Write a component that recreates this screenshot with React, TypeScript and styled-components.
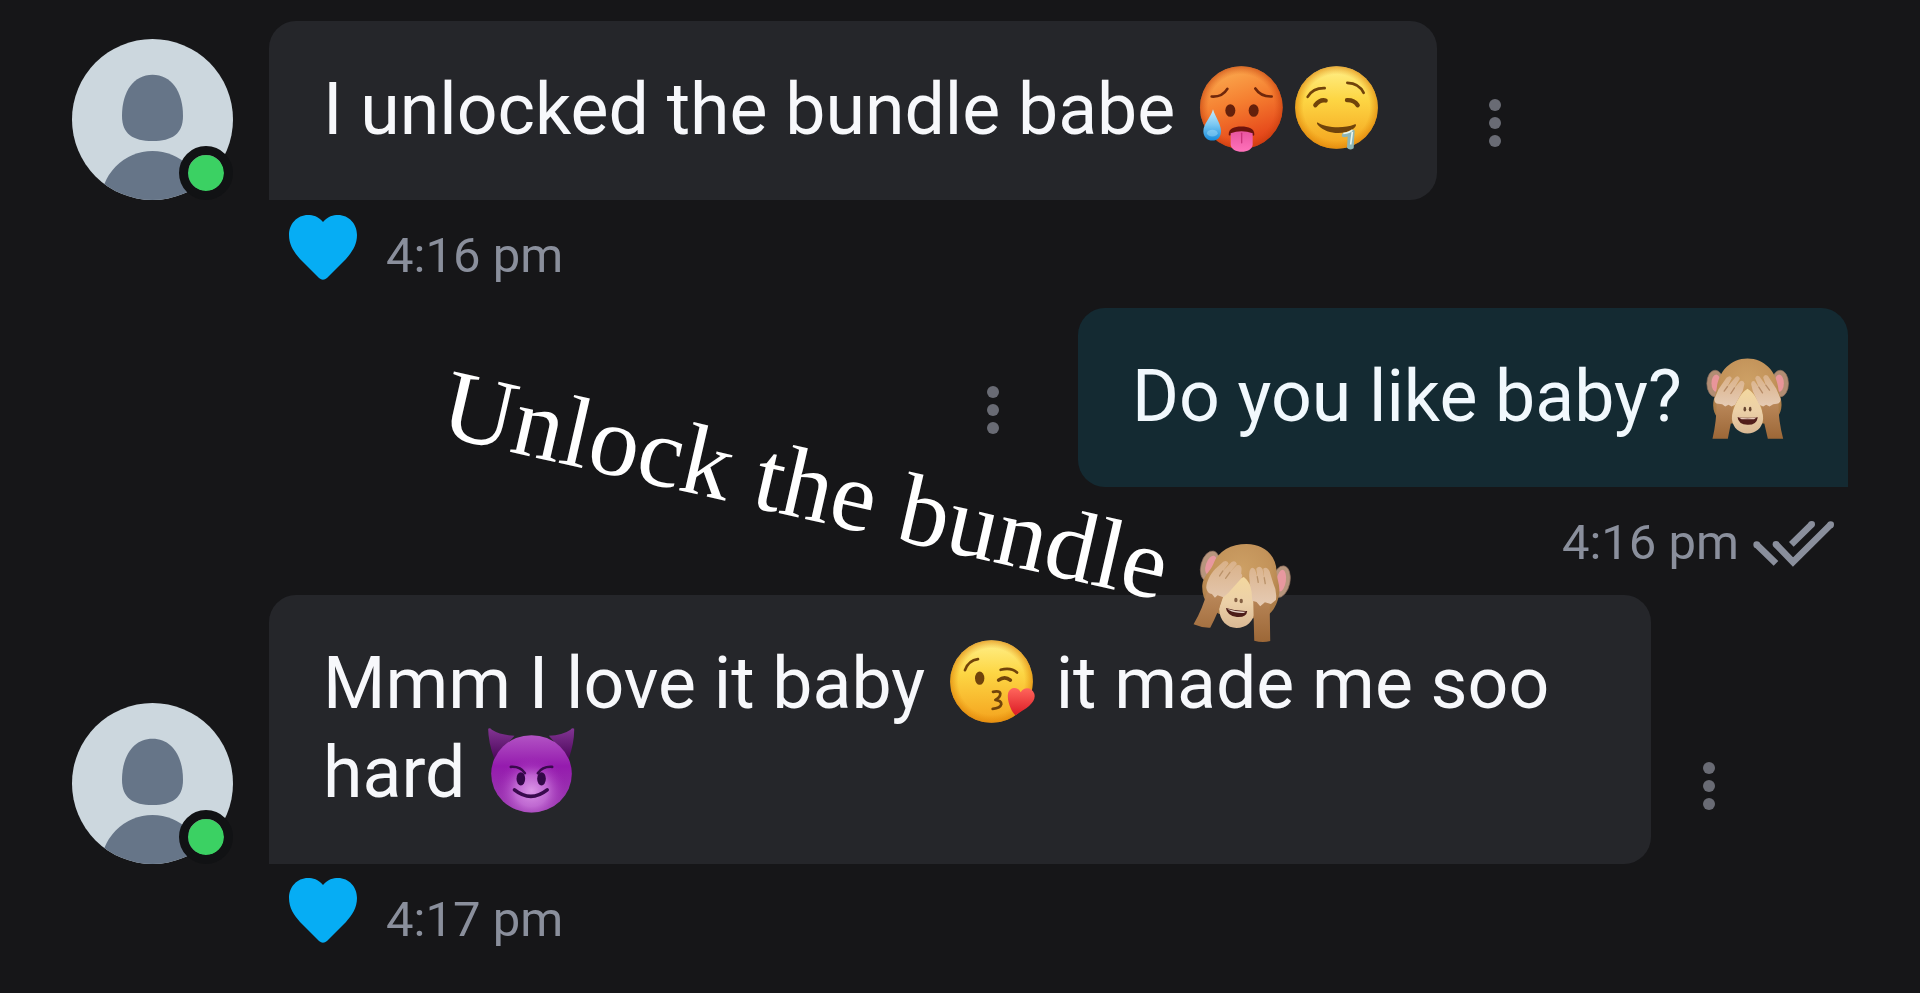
import React from 'react';
import styled, { createGlobalStyle } from 'styled-components';

const GlobalStyle = createGlobalStyle`
  * { box-sizing: border-box; }
  html, body { margin: 0; background: #161618; overflow: hidden; }
`;

const Chat = styled.main`
  position: relative;
  display: flex;
  flex-direction: column;
  width: 1920px;
  height: 993px;
  padding: 20.6px 72px 0;
  background: #161618;
  font-family: Roboto, "Liberation Sans", sans-serif;
  overflow: hidden;
`;

const Message = styled.section<{ $own?: boolean }>`
  display: flex;
  flex-direction: column;
  align-items: ${p => (p.$own ? 'flex-end' : 'stretch')};
`;

const BubbleRow = styled.div`
  display: flex;
  align-items: flex-end;
`;

const AvatarBox = styled.div`
  position: relative;
  width: 161px;
  height: 161px;
  margin-right: 36px;
  flex: none;
  svg { display: block; }
`;

const Online = styled.span`
  position: absolute;
  left: 107px;
  top: 107.4px;
  width: 54px;
  height: 54px;
  border: 9px solid #111214;
  border-radius: 50%;
  background: #3bd163;
  background-clip: padding-box;
`;

const Bubble = styled.div<{ $own?: boolean; $width: number }>`
  width: ${p => p.$width}px;
  padding: 44px 40px 46px 54px;
  margin-right: ${p => (p.$own ? 0 : 52)}px;
  background: ${p => (p.$own ? '#142a32' : '#25262a')};
  border-radius: ${p => (p.$own ? '27px 27px 0 27px' : '27px 27px 27px 0')};
  color: ${p => (p.$own ? '#f1f8fd' : '#f7f8fb')};
  font-size: 71.6px;
  line-height: 89.5px;
  white-space: nowrap;
`;

const Emoji = styled.svg`
  display: inline-block;
  width: 95px;
  height: 95px;
  margin: -4.5px -0.6px -4px 0.6px;
  vertical-align: top;
  overflow: visible;
`;

const Dots = styled.div<{ $own?: boolean }>`
  display: flex;
  flex-direction: column;
  gap: 6px;
  align-self: ${p => (p.$own ? 'center' : 'flex-end')};
  margin: ${p => (p.$own ? '25px 79px 0 0' : '0 0 53.3px')};
  i {
    width: 12px;
    height: 12px;
    border-radius: 50%;
    background: #696b74;
  }
`;

const Meta = styled.div<{ $own?: boolean }>`
  display: flex;
  align-items: flex-start;
  height: 107.5px;
  padding: ${p => (p.$own ? '27px 12px 0 0' : '14px 0 0 217px')};
  svg { margin-top: ${p => (p.$own ? '3.6px' : '0.8px')}; }
`;

const Time = styled.time<{ $own?: boolean }>`
  margin: ${p => (p.$own ? '0 12px 0 0' : '13px 0 0 29px')};
  color: #8a8f9c;
  font-size: 49px;
  line-height: 58px;
`;

const Sticker = styled.div`
  position: absolute;
  left: 437px;
  top: 346px;
  display: flex;
  color: #fff;
  font: 100.3px/112px "Liberation Serif", "Times New Roman", serif;
  white-space: pre;
  transform-origin: 0 90px;
  transform: rotate(12.87deg);
  svg { width: 105px; height: 105px; margin: 9px 0 0 2px; overflow: visible; }
`;

function Avatar() {
  return (
    <AvatarBox>
      <svg width="161" height="161" viewBox="0 0 161 161">
        <defs><clipPath id="av"><circle cx="80.5" cy="80.5" r="80.5" /></clipPath></defs>
        <g clipPath="url(#av)">
          <rect width="161" height="161" fill="#ccd7de" />
          <path d="M80.5 35.7C99 35.7 111 52 111 77C111 95 100 102 80.5 102S50 95 50 77C50 52 62 35.7 80.5 35.7Z" fill="#667588" />
          <ellipse cx="80.5" cy="165" rx="52" ry="53" fill="#667588" />
        </g>
      </svg>
      <Online />
    </AvatarBox>
  );
}

function Menu({ own }: { own?: boolean }) {
  return <Dots $own={own}><i /><i /><i /></Dots>;
}

function Heart() {
  return (
    <svg width="68" height="65" viewBox="0 0 68 65">
      <path d="M34 7C29 1 24 0 19 0C8 0 0 9 0 20C0 30 5 37 11 44L30 63Q34 66.500 38 63L57 44C63 37 68 30 68 20C68 9 60 0 49 0C44 0 39 1 34 7Z" fill="#06adf4" />
    </svg>
  );
}

function Checks() {
  return (
    <svg width="85" height="50" viewBox="21 24 255 150" fill="none" stroke="#8a8f9c" strokeWidth="20">
      <path d="M38 104L96 160M96 103L147 156L260 44M142 103L203 43" />
      <g fill="#8a8f9c" stroke="none">
        <circle cx="38" cy="104" r="10" /><circle cx="96" cy="103" r="10" />
        <circle cx="260" cy="44" r="10" /><circle cx="203" cy="43" r="10" />
      </g>
    </svg>
  );
}

function HotFace() {
  return (
    <Emoji viewBox="40 61.5 285 285">
      <defs>
        <linearGradient id="hot" x1="0.3" y1="0" x2="0.65" y2="1">
          <stop offset="0" stopColor="#fbad51" /><stop offset=".45" stopColor="#f57e30" /><stop offset="1" stopColor="#e23a15" />
        </linearGradient>
        <radialGradient id="hotEdge"><stop offset=".8" stopColor="#d34a12" stopOpacity="0" /><stop offset="1" stopColor="#c23c0c" stopOpacity=".6" /></radialGradient>
        <linearGradient id="drop" x1="0" y1="0" x2="0" y2="1"><stop offset="0" stopColor="#c9ecfb" /><stop offset=".5" stopColor="#79c7f2" /><stop offset="1" stopColor="#168bdc" /></linearGradient>
        <linearGradient id="tongue" x1="0" y1="0" x2="0" y2="1"><stop offset="0" stopColor="#e9559f" /><stop offset="1" stopColor="#ff72bb" /></linearGradient>
      </defs>
      <circle cx="182" cy="204" r="124" fill="url(#hot)" />
      <circle cx="182" cy="204" r="124" fill="url(#hotEdge)" />
      <path d="M93 171Q125 173 140 148M224 147Q240 172 273 171" fill="none" stroke="#70270b" strokeWidth="8" strokeLinecap="round" />
      <ellipse cx="149" cy="213" rx="15" ry="19" fill="#65200b" />
      <ellipse cx="219" cy="213" rx="15" ry="19" fill="#65200b" />
      <path d="M144 284C145 267 160 261 182 261S221 267 221 284Q221 291 214 287Q182 275 150 287Q144 290 144 284Z" fill="#6c130d" />
      <path d="M150 281Q182 270 216 281V314C216 344 150 344 150 314Z" fill="url(#tongue)" />
      <path d="M183 281V310" stroke="#cb337b" strokeWidth="4" strokeLinecap="round" />
      <path d="M97 209C105 235 121 253 121 275C121 293 110 303 95 303S68 292 68 275C68 253 90 235 97 209Z" fill="url(#drop)" />
      <ellipse cx="95" cy="281" rx="16" ry="10" fill="#a8e0fb" opacity=".45" />
    </Emoji>
  );
}

function DroolFace() {
  return (
    <Emoji viewBox="325 61.500 285 285">
      <defs>
        <linearGradient id="yellow" x1="0" y1="0" x2="0" y2="1">
          <stop offset="0" stopColor="#fff08a" /><stop offset=".4" stopColor="#fdd644" /><stop offset="1" stopColor="#f4a21d" />
        </linearGradient>
        <radialGradient id="yellowEdge"><stop offset=".8" stopColor="#e38a09" stopOpacity="0" /><stop offset="1" stopColor="#dd8208" stopOpacity=".65" /></radialGradient>
      </defs>
      <circle cx="467.5" cy="204" r="124" fill="url(#yellow)" />
      <circle cx="467.5" cy="204" r="124" fill="url(#yellowEdge)" />
      <g fill="none" stroke="#71430a" strokeLinecap="round">
        <path d="M381 172Q397 145 432 146M500 130Q535 131 549 160" strokeWidth="8" />
        <path d="M404 197Q418 179 435 183M499 182Q520 181 531 197" strokeWidth="13" />
      </g>
      <path d="M411 249C432 265 491 268 521 255C529 252 527 261 518 268C489 288 437 284 413 258C407 251 408 248 411 249Z" fill="#70430b" />
      <path d="M485 282Q503 281 516 270L522 273L519 326Q507 334 499 325L501 291Q489 296 483 290Z" fill="#8db5b5" />
      <path d="M488 282Q507 280 515 272M515 277L510 315" fill="none" stroke="#e9f5ed" strokeWidth="5" />
    </Emoji>
  );
}

function KissFace() {
  return (
    <Emoji viewBox="280 555.500 285 285">
      <defs>
        <linearGradient id="heartRed" x1="0" y1="0" x2="0" y2="1"><stop offset="0" stopColor="#ff665c" /><stop offset="1" stopColor="#dc1c26" /></linearGradient>
      </defs>
      <circle cx="422.500" cy="698" r="124" fill="url(#yellow)" />
      <circle cx="422.500" cy="698" r="124" fill="url(#yellowEdge)" />
      <ellipse cx="387" cy="688" rx="14" ry="20" fill="#70430b" />
      <g fill="none" stroke="#71430a" strokeLinecap="round" strokeLinejoin="round">
        <path d="M343 664Q353 635 382 631M450 663Q481 655 499 671" strokeWidth="8" />
        <path d="M444 694Q462 680 479 694" strokeWidth="11" />
        <path d="M427 729Q447 725 449 734Q449 746 434 753Q452 755 452 766Q449 778 426 780" strokeWidth="8" />
      </g>
      <path d="M510 730C520 712 545 715 551 735C558 760 529 778 495 799C484 794 468 756 472 735C477 713 502 713 510 730Z" fill="url(#heartRed)" />
    </Emoji>
  );
}

function DevilFace() {
  return (
    <Emoji viewBox="552.500 311.500 285 285">
      <defs>
        <linearGradient id="devil" x1="0" y1="0" x2="0" y2="1"><stop offset="0" stopColor="#b253c4" /><stop offset=".4" stopColor="#951bae" /><stop offset="1" stopColor="#9c43b0" /></linearGradient>
        <radialGradient id="devilGlow" cx=".5" cy=".72" r=".45"><stop offset="0" stopColor="#dc97e8" /><stop offset=".45" stopColor="#cb77dc" stopOpacity=".75" /><stop offset="1" stopColor="#9c1cb4" stopOpacity="0" /></radialGradient>
        <linearGradient id="horn" x1="0" y1="0" x2="0" y2="1"><stop offset="0" stopColor="#823593" /><stop offset="1" stopColor="#4d075c" /></linearGradient>
      </defs>
      <path d="M565 326Q570 322 576 329Q601 345 644 347L583 415Q565 365 565 326ZM823 326Q818 322 812 329Q788 346 747 347L807 415Q824 365 823 326Z" fill="url(#horn)" />
      <ellipse cx="695" cy="461" rx="121" ry="116" fill="url(#devil)" />
      <ellipse cx="695" cy="461" rx="121" ry="116" fill="url(#devilGlow)" />
      <g fill="none" stroke="#390a4d" strokeLinecap="round">
        <path d="M633 440Q662 438 675 459M757 440Q728 438 714 459" strokeWidth="8" />
        <path d="M644 509Q693 548 742 509" strokeWidth="11" />
      </g>
      <ellipse cx="663" cy="476" rx="13" ry="20" fill="#320847" /><ellipse cx="725" cy="476" rx="13" ry="20" fill="#320847" />
    </Emoji>
  );
}

function Monkey() {
  return (
    <Emoji viewBox="11.500 -7.500 285 285">
      <defs>
        <radialGradient id="fur" cx=".5" cy=".35" r=".65"><stop offset="0" stopColor="#cda065" /><stop offset=".6" stopColor="#c3935a" /><stop offset="1" stopColor="#a97a46" /></radialGradient>
        <linearGradient id="arm" x1="0" y1="0" x2="0" y2="1"><stop offset="0" stopColor="#bc8a5c" /><stop offset="1" stopColor="#9c6737" /></linearGradient>
        <linearGradient id="skin" x1="0" y1="0" x2="0" y2="1"><stop offset="0" stopColor="#f3d89f" /><stop offset=".5" stopColor="#ecd0a8" /><stop offset="1" stopColor="#d9b894" /></linearGradient>
        <linearGradient id="hand" x1="0" y1="0" x2="0" y2="1"><stop offset="0" stopColor="#d9b189" /><stop offset="1" stopColor="#e6cbb4" /></linearGradient>
      </defs>
      <g fill="#b28d74" stroke="#8d6f5d" strokeWidth="2">
        <ellipse cx="57" cy="102" rx="25" ry="40" /><ellipse cx="252" cy="102" rx="25" ry="40" />
      </g>
      <g fill="#e8959a"><ellipse cx="60" cy="101" rx="14" ry="26" /><ellipse cx="249" cy="101" rx="14" ry="26" /></g>
      <path d="M154 27C205 27 240 66 246 114C247 130 257 146 256 168C255 200 235 214 214 222H94C69 211 52 200 51 168C51 146 61 130 62 114C68 66 103 27 154 27Z" fill="url(#fur)" />
      <path d="M154 118C176 130 201 176 201 208C199 237 177 252 154 252S110 237 107 208C107 176 133 130 154 118Z" fill="url(#skin)" />
      <path d="M61 153L111 163Q107 217 95 268H49Q63 207 61 153ZM247 153L196 163Q201 217 215 268H261Q245 207 247 153Z" fill="url(#arm)" />
      <path d="M55 147L67 119L91 85Q102 75 107 86L94 111L118 83Q128 76 131 88L115 115L132 95Q142 90 145 102L140 124L117 166L106 171L97 166L87 171L78 164L66 163Q53 161 55 147ZM253 147L240 117L215 79Q204 72 201 84L209 107L190 81Q180 74 177 86L188 113L175 95Q166 92 165 104L170 125L189 166L201 171L210 166L220 171L231 164L242 163Q255 161 253 147Z" fill="url(#hand)" />
      <path d="M94 111L84 125M115 115L104 132M209 107L220 122M188 113L199 130" stroke="#b78c67" strokeWidth="4" strokeLinecap="round" />
      <g fill="#67452f"><ellipse cx="146" cy="179" rx="4" ry="7" /><ellipse cx="162" cy="179" rx="4" ry="7" /></g>
      <path d="M124 203Q154 207 185 203Q181 227 154 226T124 203Z" fill="#511d1a" />
      <path d="M128 204Q154 208 181 204L174 209H136Z" fill="#e7cabb" />
    </Emoji>
  );
}

function StickerMonkey() {
  return (
    <svg viewBox="1.500 7.500 315 315">
      <g transform="rotate(-12.87 159 165)">
        <g stroke="#8e6f5f" strokeWidth="2" fill="#b7957d">
          <ellipse cx="59" cy="90" rx="27" ry="46" transform="rotate(15 59 90)" /><ellipse cx="272" cy="137" rx="27" ry="48" transform="rotate(12 272 137)" />
        </g>
        <ellipse cx="62" cy="88" rx="15" ry="30" fill="#e8989f" transform="rotate(19 62 88)" />
        <ellipse cx="273" cy="134" rx="14" ry="33" fill="#e8989f" transform="rotate(8 273 134)" />
        <path d="M169 24C224 24 258 61 259 105C258 125 270 145 267 171C262 211 240 244 207 248L97 238C60 224 34 192 36 148C39 119 59 108 69 85C83 44 124 24 169 24Z" fill="url(#fur)" />
        <path d="M161 123C183 142 197 177 196 219C191 258 167 276 139 276S88 255 87 220C91 176 126 139 161 123Z" fill="url(#skin)" />
        <path d="M51 165L99 181Q85 229 60 275Q35 276 10 265Q38 217 51 165ZM189 195H238L240 315Q217 322 192 314Z" fill="url(#arm)" />
        <path d="M48 155C49 136 60 115 75 99L99 77Q112 71 115 83L98 105L124 78Q136 71 140 84L119 109L139 88Q152 83 154 98L153 113Q160 117 151 130L114 171L99 184L82 178L74 185L65 174Q51 173 48 155ZM178 105Q184 88 195 101L201 122L198 98Q207 86 217 99L222 125L219 98Q230 90 238 106L249 142Q261 166 257 192L242 204L224 199L210 211L199 198L186 194L184 167Q174 131 178 105Z" fill="url(#hand)" />
        <path d="M98 105L88 120M119 109L106 127M201 122L204 139M222 125L225 143" stroke="#ba9269" strokeWidth="4" strokeLinecap="round" />
        <ellipse cx="137" cy="192" rx="5" ry="7" fill="#856044" /><ellipse cx="153" cy="195" rx="5" ry="7" fill="#856044" />
        <path d="M107 216Q138 226 171 225Q169 245 140 243Q110 239 107 216Z" fill="#4c1c18" />
        <path d="M112 219Q139 228 167 227L160 231Q134 232 117 223Z" fill="#e5d3c8" />
      </g>
    </svg>
  );
}

export default function App() {
  return (
    <>
      <GlobalStyle />
      <Chat>
        <Message>
          <BubbleRow>
            <Avatar />
            <Bubble $width={1168}>I unlocked the bundle babe <HotFace /><DroolFace /></Bubble>
            <Menu />
          </BubbleRow>
          <Meta><Heart /><Time>4:16 pm</Time></Meta>
        </Message>
        <Message $own>
          <BubbleRow>
            <Menu own />
            <Bubble $own $width={770}>Do you like baby? <Monkey /></Bubble>
          </BubbleRow>
          <Meta $own><Time $own>4:16 pm</Time><Checks /></Meta>
        </Message>
        <Message>
          <BubbleRow>
            <Avatar />
            <Bubble $width={1382}>Mmm I love it baby <KissFace /> it made me soo<br />hard <DevilFace /></Bubble>
            <Menu />
          </BubbleRow>
          <Meta><Heart /><Time>4:17 pm</Time></Meta>
        </Message>
        <Sticker>Unlock the bundle <StickerMonkey /></Sticker>
      </Chat>
    </>
  );
}
